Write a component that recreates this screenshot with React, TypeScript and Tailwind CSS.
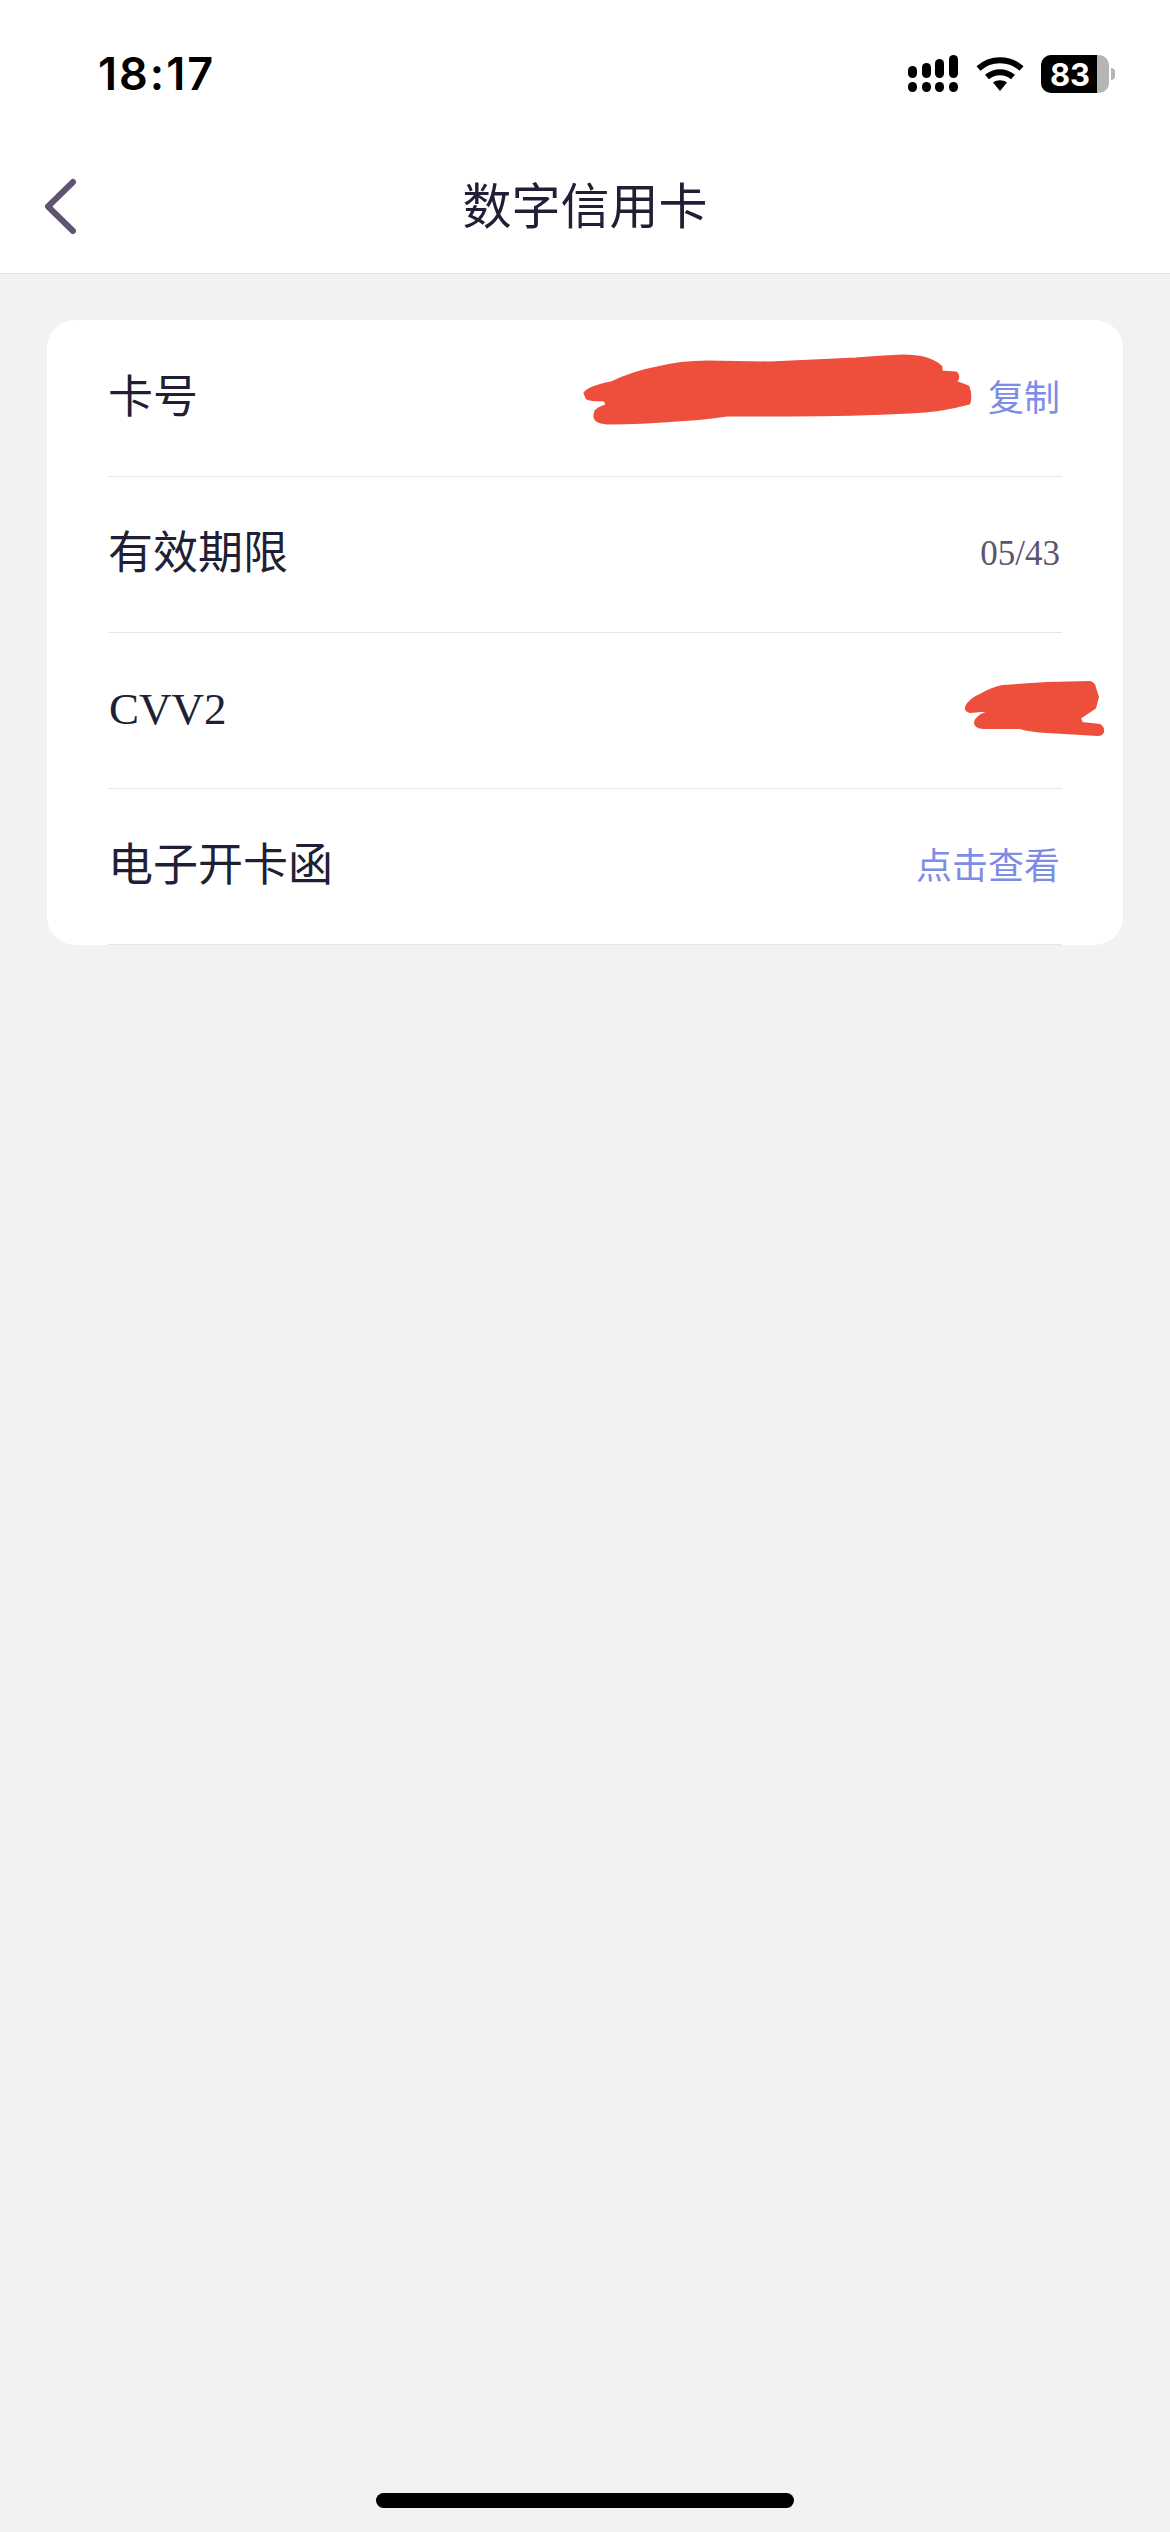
import React from 'react';

const rows = [
  { label: '卡号', value: '复制', tone: 'link', latin: false },
  { label: '有效期限', value: '05/43', tone: 'muted', latin: false },
  { label: 'CVV2', value: '', tone: 'muted', latin: true },
  { label: '电子开卡函', value: '点击查看', tone: 'link', latin: false },
];

function SignalIcon() {
  return (
    <svg width="52" height="38" viewBox="0 0 52 38" fill="#000">
      <rect x="1" y="11" width="9" height="12" rx="4.5" />
      <rect x="15" y="8" width="9" height="15" rx="4.5" />
      <rect x="28" y="4" width="9" height="19" rx="4.5" />
      <rect x="42" y="0" width="9" height="23" rx="4.5" />
      <rect x="1" y="27" width="9" height="10" rx="4.5" />
      <rect x="15" y="27" width="9" height="10" rx="4.5" />
      <rect x="28" y="27" width="9" height="10" rx="4.5" />
      <rect x="42" y="27" width="9" height="10" rx="4.5" />
    </svg>
  );
}

function WifiIcon() {
  return (
    <svg width="48" height="36" viewBox="0 0 48 36" fill="none" stroke="#000" strokeWidth="6">
      <path d="M2.5 12.5C14.5 1.5 33.5 1.5 45.500 12.500" />
      <path d="M11 21C18.500 14.500 29.500 14.500 37 21" />
      <path d="M17 26.500C21 23.500 27 23.500 31 26.500L24 35Z" fill="#000" stroke="none" />
    </svg>
  );
}

function Battery() {
  return (
    <div className="flex items-center">
      <div className="flex h-[38px] w-[68px] overflow-hidden rounded-[10px] bg-[#b5b5b5]">
        <div className="flex w-[56px] items-center justify-center bg-black pl-[2px] font-['Inter',sans-serif] text-[31px] leading-none font-bold text-white">
          83
        </div>
      </div>
      <div className="ml-[2px] h-[12px] w-[4px] rounded-r-full bg-[#b5b5b5]" />
    </div>
  );
}

function NumberScribble() {
  return (
    <svg className="absolute top-[32px] left-[536px]" width="390" height="74" viewBox="583 353 390 74" fill="#ee4f3c" stroke="#ee4f3c" strokeWidth="3" strokeLinejoin="round">
      <path d="M585 393Q590 387 611 383Q635 372 657 368Q680 362 708 362L770 363L856 359Q880 357 902 356Q930 356 941 367L941 372L956 373Q960 378 955 382L968 387Q971 395 969 403Q940 411 910 412Q850 415 793 415L727 415Q700 419 677 420Q640 423 611 423Q596 423 595 417Q594 410 603 407L607 405L605 400Q590 400 587 398Z" />
    </svg>
  );
}

function CvvScribble() {
  return (
    <svg className="absolute top-[46px] left-[917px]" width="142" height="58" viewBox="964 679 142 58" fill="#ee4f3c" stroke="#ee4f3c" strokeWidth="2" strokeLinejoin="round">
      <path d="M966 707Q970 699 980 695Q992 688 1003 686L1047 683L1090 682Q1095 684 1095 688L1098 697L1095 708L1080 718L1082 723L1100 725Q1104 728 1103 732Q1102 735 1098 735L1047 732Q1030 731 1020 728L983 728Q975 727 975 723Q975 719 981 715L993 710L970 712Q965 711 966 707Z" />
    </svg>
  );
}

export default function App() {
  return (
    <div className="flex min-h-[2532px] flex-col bg-[#f1f2f4] font-['Liberation_Serif','Noto_Sans_CJK_SC',serif] text-[#211f35]">
      <div className="border-b border-[#dfe0e3] bg-white">
        <div className="flex h-[149px] items-start justify-between pt-[52px] pr-[55px] pl-[98px]">
          <span className="font-['Inter',sans-serif] text-[45px] leading-[44px] font-semibold tracking-[2px] text-black">18:17</span>
          <div className="flex items-center gap-[17px] pt-[3px]">
            <SignalIcon />
            <WifiIcon />
            <Battery />
          </div>
        </div>
        <div className="relative flex h-[124px] items-start justify-center">
          <button className="absolute top-[29px] left-[42px]">
            <svg width="36" height="57" viewBox="0 0 36 57" fill="none" stroke="#5f5470" strokeWidth="6" strokeLinecap="round" strokeLinejoin="round">
              <path d="M31 4L6 28.500L31 53" />
            </svg>
          </button>
          <h1 className="pt-[25px] font-['Noto_Sans_CJK_SC',sans-serif] text-[49px] leading-[58px] font-normal">数字信用卡</h1>
        </div>
      </div>

      <div className="mx-[47px] mt-[46px] rounded-[28px] bg-white pt-[1px]">
        {rows.map((row, index) => (
          <div key={row.label} className="relative px-[61px]">
            <div className="flex h-[156px] items-center justify-between border-b border-[#e6e6e8] pr-[2px]">
              <span className={row.latin ? 'pb-[3px] pl-[1px] text-[45px] leading-none' : 'text-[45px] leading-none'}>{row.label}</span>
              <span className={row.tone === 'link' ? 'text-[36px] leading-none text-[#7d8de6]' : 'pb-[3px] text-[35px] leading-none text-[#5a566f]'}>
                {row.value}
              </span>
            </div>
            {index === 0 && <NumberScribble />}
            {index === 2 && <CvvScribble />}
          </div>
        ))}
      </div>

      <div className="mt-auto flex justify-center pb-[24px]">
        <div className="h-[15px] w-[418px] rounded-full bg-black" />
      </div>
    </div>
  );
}
